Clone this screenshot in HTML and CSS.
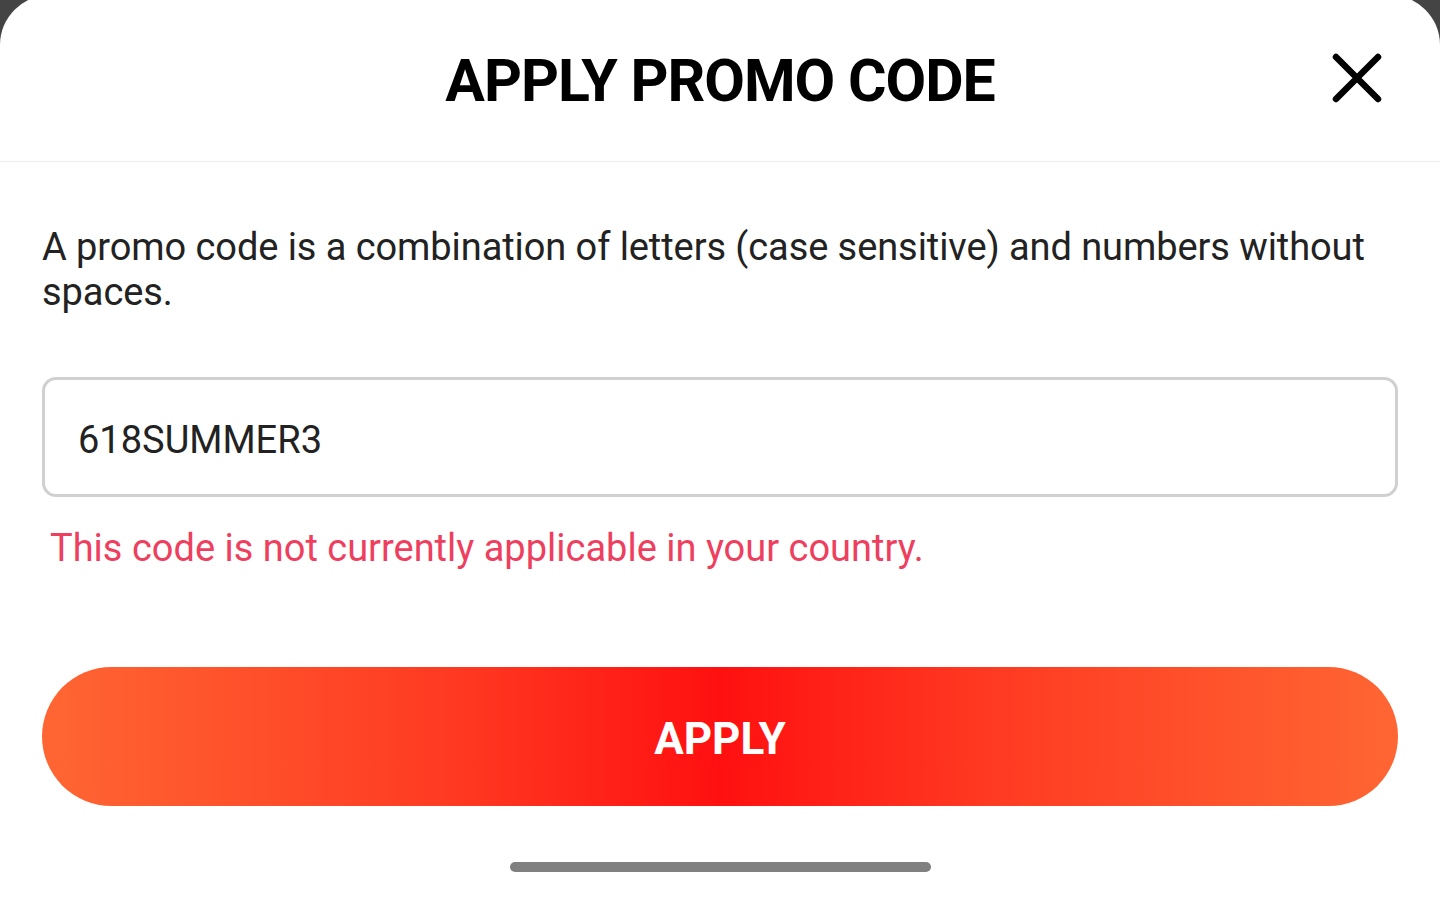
FILE: index.html
```html
<!DOCTYPE html>
<html lang="en">
<head>
<meta charset="utf-8">
<title>Apply Promo Code</title>
<link rel="stylesheet" href="styles.css">
</head>
<body>
<div class="sheet">
  <header class="sheet-header">
    <h1 class="title">APPLY PROMO CODE</h1>
    <button class="close" aria-label="Close">
      <svg width="50" height="50" viewBox="0 0 50 50"><path d="M4 4 L46 46 M46 4 L4 46" stroke="#000" stroke-width="6.5" stroke-linecap="round" fill="none"/></svg>
    </button>
  </header>
  <main class="sheet-body">
    <p class="desc">A promo code is a combination of letters (case sensitive) and numbers without spaces.</p>
    <div class="field">618SUMMER3</div>
    <p class="error">This code is not currently applicable in your country.</p>
    <button class="apply">APPLY</button>
    <div class="home-indicator"></div>
  </main>
</div>
</body>
</html>
```

FILE: styles.css
```css
html, body {
  margin: 0;
  padding: 0;
  background: #444444;
  height: 897px;
  overflow: hidden;
}
body {
  font-family: Roboto, "Liberation Sans", sans-serif;
}
.sheet {
  margin-top: -5px;
  background: #fff;
  border-radius: 50px 50px 0 0;
  height: 902px;
  display: flex;
  flex-direction: column;
}
.sheet-header {
  position: relative;
  height: 167px;
  border-bottom: 1px solid #ececec;
  display: flex;
  align-items: center;
  justify-content: center;
  box-sizing: border-box;
  padding-top: 5px;
}
.title {
  margin: 0;
  font-size: 59px;
  font-weight: 700;
  color: #000;
  letter-spacing: -1px;
  line-height: 1;
}
.close {
  position: absolute;
  right: 58px;
  top: 58px;
  width: 50px;
  height: 50px;
  padding: 0;
  border: 0;
  background: none;
}
.close svg { display: block; }
.sheet-body {
  padding: 0 42px;
  display: flex;
  flex-direction: column;
}
.desc {
  margin: 63px 0 0;
  font-size: 38px;
  line-height: 45px;
  letter-spacing: -0.08px;
  color: #222;
}
.field {
  margin-top: 62px;
  height: 120px;
  box-sizing: border-box;
  border: 3px solid #d0d0d0;
  border-radius: 14px;
  padding: 6px 0 0 33px;
  display: flex;
  align-items: center;
  font-size: 38px;
  color: #222;
}
.error {
  margin: 28px 0 0 8px;
  font-size: 38px;
  line-height: 46px;
  color: #ee3f5f;
}
.apply {
  margin-top: 96px;
  height: 139px;
  border: 0;
  border-radius: 70px;
  background: linear-gradient(90deg, #ff6633 0%, #ff3a22 30%, #ff1010 50%, #ff3a22 70%, #ff6633 100%);
  color: #fff;
  font-family: Roboto, "Liberation Sans", sans-serif;
  font-size: 44px;
  font-weight: 700;
  padding: 4px 0 0;
}
.home-indicator {
  align-self: center;
  margin-top: 56px;
  width: 421px;
  height: 10px;
  border-radius: 5px;
  background: #808080;
}
```
